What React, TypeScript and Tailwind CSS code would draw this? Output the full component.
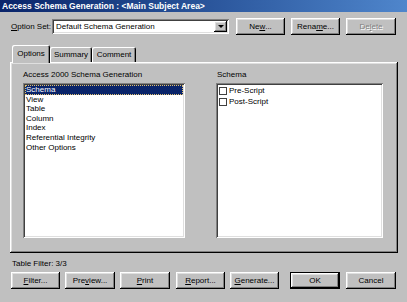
import React from "react";

const raised =
  "shadow-[inset_-1px_-1px_#000,inset_1px_1px_#fff,inset_-2px_-2px_#808080,inset_2px_2px_#dfdfdf]";

function Btn({
  children,
  className = "",
  disabled = false,
  def = false,
}: {
  children: React.ReactNode;
  className?: string;
  disabled?: boolean;
  def?: boolean;
}) {
  if (def) {
    return (
      <div className={"h-[17px] border border-black bg-[#c0c0c0] " + className}>
        <div className={"w-full h-full flex items-center justify-center " + raised}>{children}</div>
      </div>
    );
  }
  return (
    <div
      className={
        "h-[17px] bg-[#c0c0c0] flex items-center justify-center " +
        raised +
        " " +
        (disabled ? "text-[#808080] [text-shadow:1px_1px_0_#fff] " : "") +
        className
      }
    >
      {children}
    </div>
  );
}

function U({ children }: { children: React.ReactNode }) {
  return <span className="underline underline-offset-[1px]">{children}</span>;
}

export default function App() {
  const leftItems = ["View", "Table", "Column", "Index", "Referential Integrity", "Other Options"];
  return (
    <div className="w-[407px] h-[302px] bg-[#c0c0c0] flex flex-col overflow-hidden font-['Liberation_Sans',Arial,sans-serif] text-[8px] leading-[10px] text-black">
      {/* Title bar */}
      <div className="h-[12px] shrink-0 bg-gradient-to-r from-[#0a246a] to-[#4f86cc] flex items-center pl-[2px] text-white font-bold text-[8.5px]">
        Access Schema Generation : &lt;Main Subject Area&gt;
      </div>

      {/* Option set row */}
      <div className="mt-[6px] h-[17px] flex items-center pl-[11px]">
        <span className="w-[41px]">
          <U>O</U>ption Set:
        </span>
        <div className="w-[177px] h-[15px] bg-white flex items-center pl-[4px] pr-[2px] shadow-[inset_1px_1px_#808080,inset_-1px_-1px_#fff,inset_2px_2px_#404040,inset_-2px_-2px_#dfdfdf]">
          <span className="flex-1">Default Schema Generation</span>
          <div className={"w-[13px] h-[11px] bg-[#c0c0c0] flex items-center justify-center " + raised}>
            <div className="w-0 h-0 border-l-[3px] border-r-[3px] border-t-[3px] border-l-transparent border-r-transparent border-t-black" />
          </div>
        </div>
        <div className="ml-[7px] flex gap-[6px]">
          <Btn className="w-[49px]">
            Ne<U>w</U>...
          </Btn>
          <Btn className="w-[49px]">
            Rena<U>m</U>e...
          </Btn>
          <Btn className="w-[50px]" disabled>
            De<U>l</U>ete
          </Btn>
        </div>
      </div>

      {/* Tabs */}
      <div className="mt-[10px] h-[17px] pl-[12px] flex items-end relative z-10">
        <div className="h-[18px] -mb-px w-[38px] bg-[#c0c0c0] rounded-t-[2px] flex items-center justify-center shadow-[inset_1px_1px_#fff,inset_-1px_0_#000,inset_-2px_0_#808080]">
          Options
        </div>
        <div className="h-[15px] w-[42px] bg-[#c0c0c0] rounded-t-[2px] flex items-center justify-center shadow-[inset_1px_1px_#fff,inset_-1px_0_#000,inset_-2px_0_#808080]">
          Summary
        </div>
        <div className="h-[15px] w-[44px] bg-[#c0c0c0] rounded-t-[2px] flex items-center justify-center shadow-[inset_1px_1px_#fff,inset_-1px_0_#000,inset_-2px_0_#808080]">
          Comment
        </div>
      </div>

      {/* Panel */}
      <div
        className={
          "ml-[10px] w-[388px] h-[191px] bg-[#c0c0c0] pl-[13px] pt-[8px] flex gap-[31px] " + raised
        }
      >
        <div className="flex flex-col">
          <div className="h-[10px] mb-[3px]">Access 2000 Schema Generation</div>
          <div className="w-[162px] h-[155px] bg-white p-[2px] flex flex-col shadow-[inset_1px_1px_#808080,inset_-1px_-1px_#fff,inset_2px_2px_#404040,inset_-2px_-2px_#dfdfdf]">
            <div className="h-[9.6px] leading-[9.6px] bg-[#0a246a] text-white pl-[1px] outline outline-1 outline-dotted outline-[#e0c070] -outline-offset-1">
              Schema
            </div>
            {leftItems.map((t) => (
              <div key={t} className="h-[9.6px] leading-[9.6px] pl-[1px]">
                {t}
              </div>
            ))}
          </div>
        </div>
        <div className="flex flex-col">
          <div className="h-[10px] mb-[3px] pl-[1px]">Schema</div>
          <div className="w-[167px] h-[155px] bg-white pt-[2px] pl-[3px] flex flex-col shadow-[inset_1px_1px_#808080,inset_-1px_-1px_#fff,inset_2px_2px_#404040,inset_-2px_-2px_#dfdfdf]">
            {["Pre-Script", "Post-Script"].map((t) => (
              <div key={t} className="h-[11.5px] flex items-center gap-[2px]">
                <div className="w-[8px] h-[8px] border border-[#404040] bg-white" />
                <span>{t}</span>
              </div>
            ))}
          </div>
        </div>
      </div>

      {/* Table filter */}
      <div className="mt-[6px] pl-[12px] h-[10px]">Table Filter: 3/3</div>

      {/* Bottom buttons */}
      <div className="mt-[3px] pl-[11px] flex">
        <Btn className="w-[49px]">
          <U>F</U>ilter...
        </Btn>
        <Btn className="w-[50px] ml-[5px]">
          Pre<U>v</U>iew...
        </Btn>
        <Btn className="w-[50px] ml-[5px]">
          <U>P</U>rint
        </Btn>
        <Btn className="w-[49px] ml-[6px]">
          <U>R</U>eport...
        </Btn>
        <Btn className="w-[49px] ml-[5px]">
          <U>G</U>enerate...
        </Btn>
        <Btn className="w-[50px] ml-[11px]" def>
          OK
        </Btn>
        <Btn className="w-[50px] ml-[6px]">Cancel</Btn>
      </div>
    </div>
  );
}
